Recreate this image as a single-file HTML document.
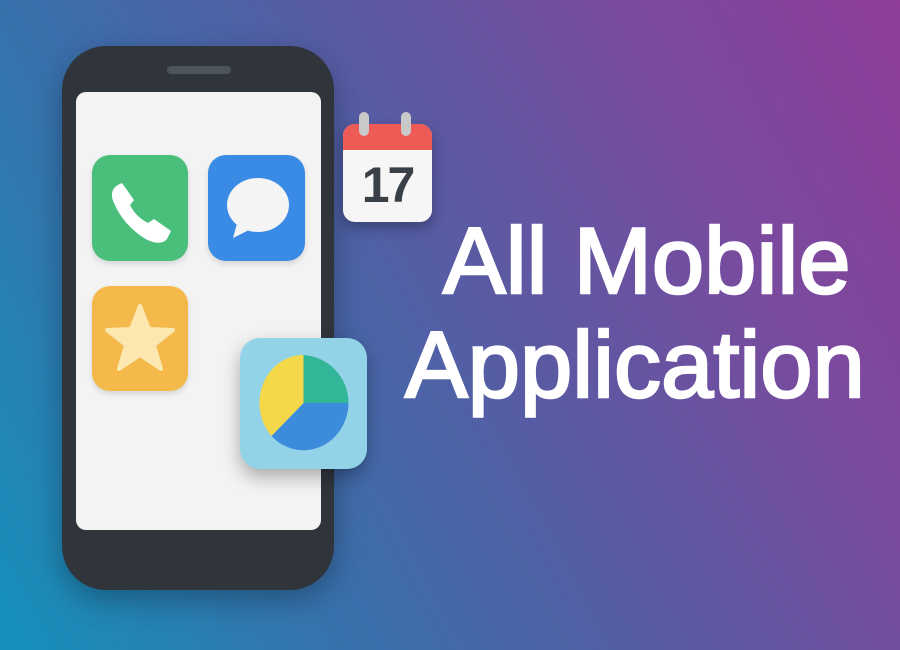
<!DOCTYPE html>
<html><head><meta charset="utf-8"><style>
html,body{margin:0;padding:0}
body{width:900px;height:650px;overflow:hidden;position:relative;
background:linear-gradient(62deg,#1591bb 0%,#3a6fac 30%,#5a5aa3 55%,#7a4a9e 78%,#8e3d98 100%);
font-family:"Liberation Sans",sans-serif}
.abs{position:absolute}
.phone{left:62px;top:46px;width:272px;height:544px;background:#30353c;border-radius:44px;box-shadow:0 10px 30px rgba(0,0,0,.3)}
.spk{left:105px;top:20px;width:64px;height:8px;border-radius:4px;background:#4d545c}
.screen{left:76px;top:92px;width:245px;height:438px;background:#f3f3f3;border-radius:10px}
.ic{border-radius:18px;box-shadow:0 3px 6px rgba(0,0,0,.12)}
.t{color:#fff;font-size:94px;letter-spacing:0;-webkit-text-stroke:2.5px #fff;white-space:nowrap;line-height:1}
</style></head><body>
<div class="abs phone"><div class="abs spk"></div></div>
<div class="abs screen"></div>
<div class="abs ic" style="left:92px;top:155px;width:96px;height:106px;background:#4abf7c">
<svg width="96" height="106" viewBox="0 0 96 106"><path d="M22 48 C18 40 20 33 26 30 L30 28 L42 45 L38 50 C42 58 48 64 56 68 L62 64 L79 76 L75 84 C70 90 60 88 52 83 C38 74 28 62 22 48Z" fill="#fff"/></svg></div>
<div class="abs ic" style="left:208px;top:155px;width:97px;height:106px;background:#3a8be6">
<svg width="97" height="106" viewBox="0 0 97 106"><ellipse cx="50" cy="50" rx="31" ry="27" fill="#f4f4f4"/><path d="M30 65 L25 83 L45 73Z" fill="#f4f4f4"/></svg></div>
<div class="abs ic" style="left:92px;top:286px;width:96px;height:105px;background:#f5b84a">
<svg width="96" height="105" viewBox="0 0 96 105"><path d="M48 20 L57 43 L81 44 L62 59 L69 83 L48 69 L27 83 L34 59 L15 44 L39 43Z" fill="#fbe8b0" stroke="#fbe8b0" stroke-width="4" stroke-linejoin="round"/></svg></div>
<div class="abs" style="left:240px;top:338px;width:127px;height:131px;background:#93d3e8;border-radius:20px;box-shadow:0 8px 18px rgba(0,0,0,.3)">
<svg width="127" height="131" viewBox="0 0 127 131"><g transform="translate(63.5,65)"><path d="M0 0 L0 -48 A48 48 0 0 1 45 0Z" fill="#33b597"/><path d="M0 0 L45 0 A45 48 0 0 1 -32 33Z" fill="#3d8bdb"/><path d="M0 0 L-32 33 A44 48 0 0 1 0 -48Z" fill="#f4d84a"/></g></svg></div>
<div class="abs" style="left:343px;top:124px;width:89px;height:98px;background:#f6f6f6;border-radius:12px;overflow:hidden;box-shadow:0 6px 14px rgba(0,0,0,.3)">
<div class="abs" style="left:0;top:0;width:89px;height:26px;background:#ee5a56"></div>
<div class="abs" style="left:0;top:36px;width:89px;text-align:center;font-size:50px;font-weight:bold;color:#3a4048;letter-spacing:-2px;line-height:1">17</div></div>
<div class="abs" style="left:359px;top:112px;width:10px;height:24px;background:#c9c9c9;border-radius:5px"></div>
<div class="abs" style="left:401px;top:112px;width:10px;height:24px;background:#c9c9c9;border-radius:5px"></div>
<div class="abs t" style="left:443px;top:214px">All Mobile</div>
<div class="abs t" style="left:405px;top:318px">Application</div>
</body></html>
